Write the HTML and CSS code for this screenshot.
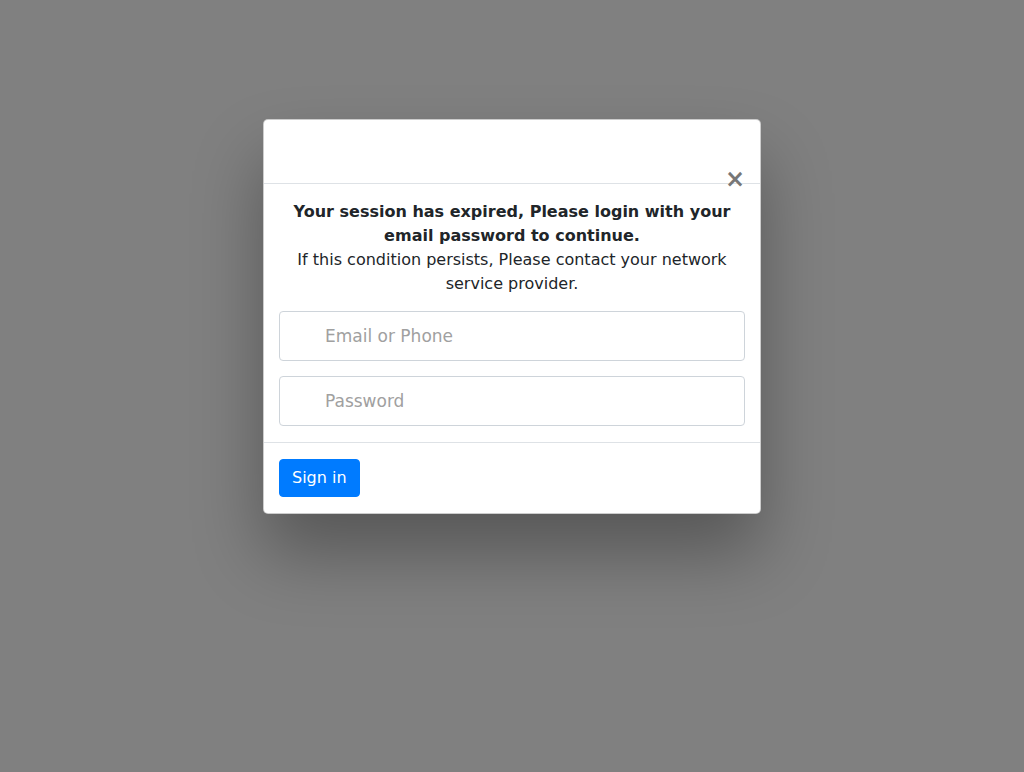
FILE: index.html
```html
<!DOCTYPE html>
<html lang="en">
<head>
<meta charset="utf-8">
<title>Session expired</title>
<link rel="stylesheet" href="styles.css">
</head>
<body>
<div class="backdrop">
  <div class="modal">
    <div class="modal-header">
      <button class="close" type="button" aria-label="Close">×</button>
    </div>
    <div class="modal-body">
      <p class="msg"><strong>Your session has expired, Please login with your email password to continue.</strong><br>If this condition persists, Please contact your network service provider.</p>
      <input class="field" type="text" placeholder="Email or Phone">
      <input class="field" type="password" placeholder="Password">
    </div>
    <div class="modal-footer">
      <button class="btn" type="button">Sign in</button>
    </div>
  </div>
</div>
</body>
</html>
```
FILE: styles.css
```css
* { box-sizing: border-box; }
html, body { margin: 0; height: 100%; }
body {
  background: #808080;
  font-family: "DejaVu Sans", sans-serif;
  font-size: 16px;
  line-height: 24px;
  color: #212529;
}
.backdrop {
  display: flex;
  justify-content: center;
  padding-top: 119px;
}
.modal {
  width: 498px;
  background: #fff;
  border: 1px solid rgba(0,0,0,.2);
  border-radius: 5px;
  box-shadow: 0 40px 70px rgba(0,0,0,.32);
}
.modal-header {
  height: 64px;
  border-bottom: 1px solid #dee2e6;
  display: flex;
  justify-content: flex-end;
  align-items: flex-end;
  padding-right: 15px;
}
.close {
  border: 0;
  background: none;
  padding: 0;
  font-family: "DejaVu Sans", sans-serif;
  font-size: 24px;
  font-weight: bold;
  line-height: 24px;
  color: #777;
  margin-bottom: -8px;
  cursor: pointer;
}
.modal-body {
  padding: 16px 15px 16px 15px;
}
.msg {
  margin: 0 0 15px;
  text-align: center;
}
.field {
  display: block;
  width: 100%;
  height: 50px;
  margin: 0 0 15px;
  border: 1px solid #ced4da;
  border-radius: 4px;
  padding: 0 12px 0 45px;
  font-family: "DejaVu Sans", sans-serif;
  font-size: 17px;
  color: #495057;
  background: #fff;
}
.field:last-child { margin-bottom: 0; }
.field::placeholder { color: #a0a0a0; }
.modal-footer {
  border-top: 1px solid #dee2e6;
  padding: 16px 15px;
  display: flex;
}
.btn {
  height: 38px;
  padding: 0 12px;
  border: 1px solid #007bff;
  background: #007bff;
  color: #fff;
  border-radius: 4px;
  font-family: "DejaVu Sans", sans-serif;
  font-size: 16px;
  line-height: 24px;
}
```
